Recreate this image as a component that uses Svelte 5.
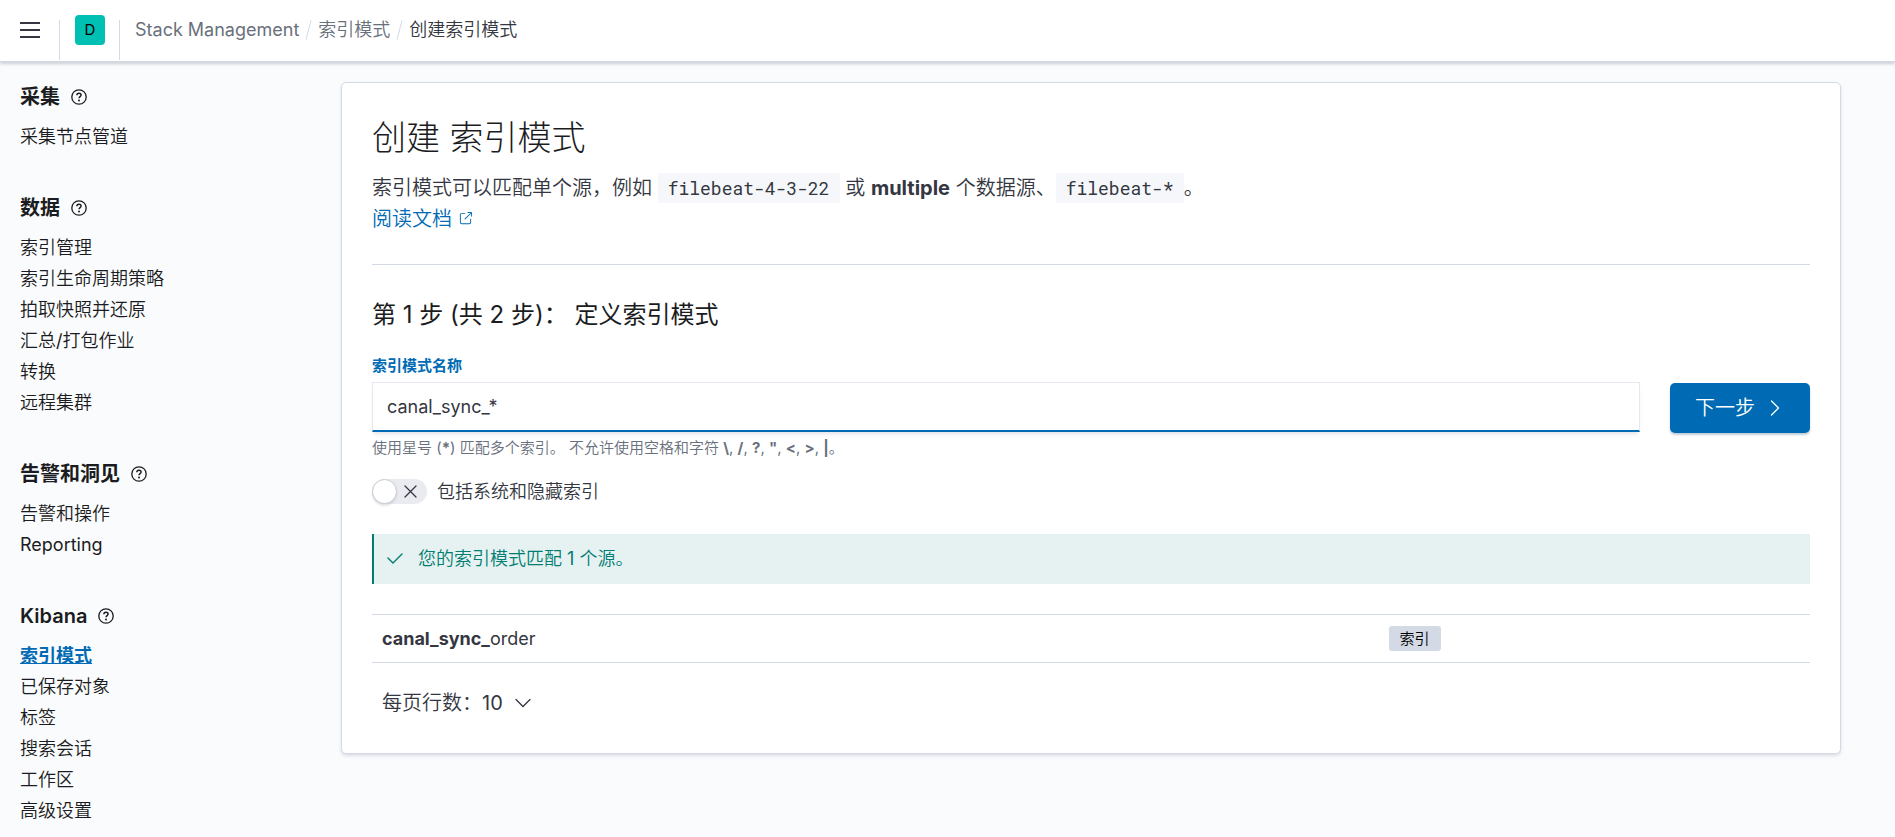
<script>
  const sections = [
    { title: '采集', items: ['采集节点管道'] },
    { title: '数据', items: ['索引管理', '索引生命周期策略', '拍取快照并还原', '汇总/打包作业', '转换', '远程集群'] },
    { title: '告警和洞见', items: ['告警和操作', 'Reporting'] },
    { title: 'Kibana', items: ['索引模式', '已保存对象', '标签', '搜索会话', '工作区', '高级设置'] }
  ];
  const current = '索引模式';

  let pattern = $state('canal_sync_*');
  let includeHidden = $state(false);
</script>

<div class="page" lang="zh-CN">
  <header class="header">
    <button class="menu" aria-label="菜单">
      <svg width="20" height="20" viewBox="0 0 20 20"><path d="M0 3h20M0 10h20M0 17h20" stroke="#343741" stroke-width="2" /></svg>
    </button>
    <div class="space"><a href="#space" class="avatar">D</a></div>
    <nav class="crumbs" aria-label="面包屑">
      <a href="#management">Stack Management</a>
      <span class="slash"></span>
      <a href="#patterns">索引模式</a>
      <span class="slash"></span>
      <span class="last">创建索引模式</span>
    </nav>
  </header>

  <div class="body">
    <aside class="sidebar">
      {#each sections as section}
        <section>
          <h2>
            {section.title}
            <svg class="help" width="16" height="16" viewBox="0 0 16 16" fill="none" stroke="#1a1c21">
              <circle cx="8" cy="8" r="7.2" stroke-width="1.3" />
              <path d="M5.9 6.3c0-1.3.9-2.1 2.1-2.1s2.1.8 2.1 1.9c0 1.5-2 1.6-2 3.1" stroke-width="1.5" />
              <circle cx="8" cy="11.4" r="1" fill="#1a1c21" stroke="none" />
            </svg>
          </h2>
          <ul>
            {#each section.items as item}
              <li><a href="#{item}" class:current={item === current}>{item}</a></li>
            {/each}
          </ul>
        </section>
      {/each}
    </aside>

    <main>
      <div class="panel">
        <h1>创建 索引模式</h1>
        <p class="intro">
          索引模式可以匹配单个源，例如 <code>filebeat-4-3-22</code> 或 <strong>multiple</strong> 个数据源、<code>filebeat-*</code>。<br />
          <a href="#docs">阅读文档 <svg width="15" height="15" viewBox="0 0 16 16" fill="currentColor"><path d="M13 8.5a.5.5 0 111 0V12a2 2 0 01-2 2H4a2 2 0 01-2-2V4a2 2 0 012-2h3.5a.5.5 0 010 1H4a1 1 0 00-1 1v8a1 1 0 001 1h8a1 1 0 001-1V8.500zm-5.120.339a.5.5 0 11-.706-.707L13.305 2H10.500a.5.5 0 110-1H14a1 1 0 011 1v3.500a.5.5 0 11-1 0V2.720L7.880 8.838z" /></svg></a>
        </p>
        <hr />

        <h2 class="step">第 1 步 (共 2 步)： 定义索引模式</h2>
        <div class="form-row">
          <div class="field">
            <label for="pattern">索引模式名称</label>
            <input id="pattern" type="text" bind:value={pattern} />
            <div class="hint">使用星号 (<b>*</b>) 匹配多个索引。 不允许使用空格和字符 <b>\</b>, <b>/</b>, <b>?</b>, <b>"</b>, <b>&lt;</b>, <b>&gt;</b>, <b>|</b>。</div>
          </div>
          <button class="next">
            下一步
            <svg width="20" height="20" viewBox="0 0 20 20" fill="none" stroke="currentColor" stroke-width="1.3" stroke-linecap="round"><path d="M6.500 3l7 7-7 7" /></svg>
          </button>
        </div>

        <label class="switch">
          <input type="checkbox" role="switch" bind:checked={includeHidden} />
          <span class="track">
            <span class="thumb"></span>
            <svg width="15" height="15" viewBox="0 0 15 15" stroke="#343741" stroke-width="1.3" stroke-linecap="round"><path d="M2 2l11 11M13 2L2 13" /></svg>
          </span>
          包括系统和隐藏索引
        </label>

        <div class="callout">
          <svg width="20" height="20" viewBox="0 0 20 20" fill="none" stroke="currentColor" stroke-width="1.4" stroke-linecap="round"><path d="M3 9l5 5 9-9" /></svg>
          您的索引模式匹配 1 个源。
        </div>

        <table>
          <tbody>
            <tr>
              <td class="name"><strong>canal_sync_</strong>order</td>
              <td><span class="badge">索引</span></td>
            </tr>
          </tbody>
        </table>

        <button class="rows">
          每页行数：10
          <svg width="20" height="20" viewBox="0 0 20 20" fill="none" stroke="currentColor" stroke-width="1.3" stroke-linecap="round"><path d="M3 6.500l7 7 7-7" /></svg>
        </button>
      </div>
    </main>
  </div>
</div>

<style>
  :global(body) {
    background: #fafbfd;
  }

  .page {
    font-family: Inter, 'Noto Sans CJK SC DemiLight', 'Noto Sans CJK SC', sans-serif;
    font-size: 18px;
    line-height: 30px;
    color: #343741;
  }
  .page * {
    box-sizing: border-box;
  }
  a {
    color: #006bb4;
    text-decoration: none;
  }
  button {
    font: inherit;
    color: inherit;
    border: 0;
    background: none;
    cursor: pointer;
  }
  svg {
    flex: none;
  }

  .header {
    display: flex;
    align-items: flex-start;
    height: 62px;
    background: #fff;
    border-bottom: 1px solid #d3dae6;
    box-shadow: 0 2px 3px rgba(65, 78, 101, 0.25);
  }
  .menu {
    display: flex;
    align-items: center;
    width: 59px;
    height: 60px;
    padding: 0 0 0 20px;
  }
  .space {
    margin-top: 20px;
    height: 40px;
    padding: 0 14px 0 15px;
    border: 1px solid #d3dae6;
    border-width: 0 1px;
  }
  .avatar {
    display: block;
    width: 30px;
    height: 30px;
    margin-top: -5px;
    border-radius: 4px;
    background: #00bfb3;
    color: #000;
    font-size: 15px;
    text-align: center;
  }
  .crumbs {
    display: flex;
    align-items: center;
    height: 60px;
    padding-left: 15px;
  }
  .crumbs a {
    color: #69707d;
  }
  .slash {
    width: 1px;
    height: 20px;
    margin: 0 9px;
    background: #d3dae6;
    transform: rotate(15deg);
  }

  .body {
    display: flex;
  }
  .sidebar {
    flex: 0 0 287px;
    padding: 20px 20px 0;
  }
  section {
    margin-bottom: 41px;
  }
  section:last-child {
    margin-bottom: 0;
  }
  .sidebar h2 {
    display: flex;
    align-items: center;
    gap: 11px;
    margin: 0 0 9px;
    font-family: Inter, 'Noto Sans CJK SC', sans-serif;
    font-size: 20px;
    line-height: 30px;
    font-weight: 600;
    color: #1a1c21;
  }
  ul {
    margin: 0;
    padding: 0;
    list-style: none;
  }
  li {
    height: 31px;
    line-height: 31px;
  }
  li a {
    color: #1a1c21;
  }
  li a.current {
    font-family: Inter, 'Noto Sans CJK SC', sans-serif;
    color: #006bb4;
    font-weight: 700;
    text-decoration: underline;
  }

  main {
    flex: 1;
    min-width: 0;
    padding-top: 20px;
  }
  .panel {
    max-width: 1500px;
    margin: 0 auto;
    padding: 30px;
    background: #fff;
    border: 1px solid #d3dae6;
    border-radius: 5px;
    box-shadow: 0 2px 3px rgba(152, 162, 179, 0.3);
  }
  h1 {
    margin: 0 0 10px;
    font-family: Inter, 'Noto Sans CJK SC', sans-serif;
    font-size: 34px;
    line-height: 50px;
    font-weight: 300;
    color: #1a1c21;
  }
  .intro {
    margin: 0;
    font-size: 20px;
    line-height: 31px;
  }
  code {
    padding: 3px 10px;
    background: #f5f7fa;
    font-family: 'Roboto Mono', 'Liberation Mono', monospace;
    font-size: 18px;
  }
  hr {
    margin: 29px 0 30px;
    border: 0;
    border-top: 1px solid #d3dae6;
  }
  .step {
    margin: 0 0 20px;
    font-family: Inter, 'Noto Sans CJK SC', sans-serif;
    font-size: 24px;
    line-height: 40px;
    font-weight: 400;
    color: #1a1c21;
  }

  .form-row {
    display: flex;
    align-items: flex-start;
    gap: 30px;
  }
  .field {
    flex: 1;
  }
  .field label {
    display: block;
    margin-bottom: 5px;
    font-family: Inter, 'Noto Sans CJK SC', sans-serif;
    font-size: 15px;
    line-height: 22px;
    font-weight: 600;
    color: #006bb4;
  }
  .field input {
    display: block;
    width: 100%;
    height: 50px;
    padding: 0 14px;
    border: 1px solid #e6e9f1;
    border-bottom: 2px solid #006bb4;
    background: #fff;
    box-shadow: 0 4px 4px -2px rgba(152, 162, 179, 0.3);
    font: inherit;
    color: inherit;
    outline: none;
  }
  .hint {
    padding-top: 5px;
    font-size: 15px;
    line-height: 22px;
    color: #69707d;
  }
  .next {
    display: flex;
    align-items: center;
    gap: 10px;
    height: 50px;
    margin-top: 28px;
    padding: 0 25px;
    border-radius: 5px;
    background: #006bb4;
    box-shadow: 0 2px 2px rgba(54, 97, 126, 0.3);
    color: #fff;
    font-size: 20px;
  }

  .switch {
    display: flex;
    align-items: center;
    gap: 10px;
    height: 25px;
    margin-top: 20px;
  }
  .switch input {
    position: absolute;
    opacity: 0;
  }
  .track {
    display: flex;
    align-items: center;
    justify-content: space-between;
    width: 55px;
    height: 25px;
    padding-right: 9px;
    border-radius: 13px;
    background: #e9ebf0;
  }
  .thumb {
    width: 25px;
    height: 25px;
    border: 1px solid #c9cbcd;
    border-radius: 50%;
    background: #fff;
    box-shadow: 0 2px 2px rgba(152, 162, 179, 0.3);
  }

  .callout {
    display: flex;
    align-items: center;
    gap: 13px;
    height: 50px;
    margin: 30px 0;
    padding-left: 11px;
    border-left: 2px solid #017d73;
    background: #e6f2f1;
    color: #017d73;
  }

  table {
    width: 100%;
    border-collapse: collapse;
    table-layout: fixed;
  }
  td {
    height: 48px;
    padding: 0 10px;
    border: 1px solid #d3dae6;
    border-width: 1px 0;
  }
  .name {
    width: 70%;
  }
  .badge {
    display: block;
    width: max-content;
    padding: 0 11px;
    border-radius: 3px;
    background: #d3dae6;
    color: #000;
    font-size: 15px;
    line-height: 25px;
  }
  .rows {
    display: flex;
    align-items: center;
    gap: 10px;
    height: 40px;
    margin-top: 20px;
    padding: 0 10px;
    font-size: 20px;
  }
</style>
